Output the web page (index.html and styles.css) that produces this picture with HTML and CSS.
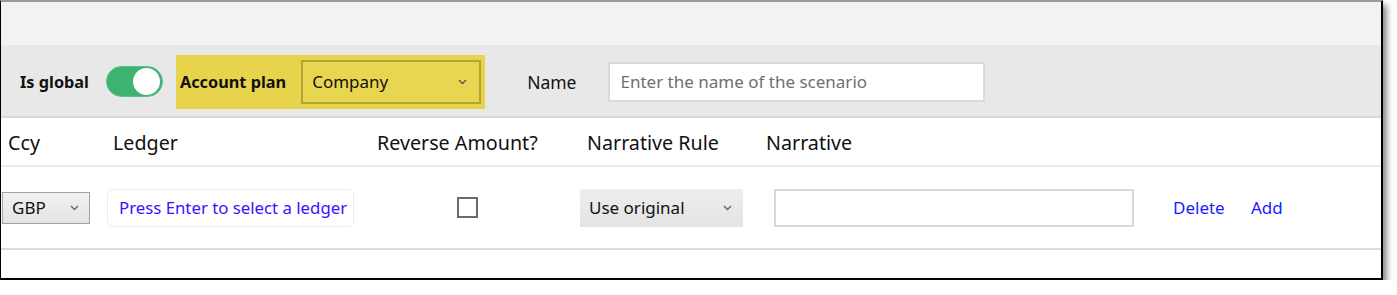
FILE: index.html
```html
<!DOCTYPE html>
<html lang="en">
<head>
    <meta charset="UTF-8">
    <title>Scenario rules</title>
    <link rel="stylesheet" href="styles.css">
</head>
<body>

    <div class="frame">
        <div class="top-strip"></div>

        <div class="toolbar">
            <span class="label bold">Is global</span>
            <span class="toggle on"><span class="knob"></span></span>

            <div class="highlight">
                <span class="label bold">Account plan</span>
                <div class="select plan-select">
                    <span>Company</span>
                    <svg class="chevron" width="9" height="6" viewBox="0 0 9 6"><polyline points="1,1 4.5,4.5 8,1" fill="none" stroke="#555" stroke-width="1.4"/></svg>
                </div>
            </div>

            <span class="label name-label">Name</span>
            <input class="name-input" type="text" placeholder="Enter the name of the scenario">
        </div>

        <div class="grid head-row">
            <div class="cell h-ccy">Ccy</div>
            <div class="cell h-ledger">Ledger</div>
            <div class="cell h-reverse">Reverse Amount?</div>
            <div class="cell h-rule">Narrative Rule</div>
            <div class="cell h-narrative">Narrative</div>
            <div class="cell"></div>
            <div class="cell"></div>
        </div>

        <div class="grid body-row">
            <div class="cell c-ccy">
                <div class="select ccy-select">
                    <span>GBP</span>
                    <svg class="chevron" width="9" height="6" viewBox="0 0 9 6"><polyline points="1,1 4.5,4.5 8,1" fill="none" stroke="#666" stroke-width="1.4"/></svg>
                </div>
            </div>
            <div class="cell c-ledger">
                <button class="ledger-btn">Press Enter to select a ledger</button>
            </div>
            <div class="cell c-reverse">
                <span class="checkbox"></span>
            </div>
            <div class="cell c-rule">
                <div class="select rule-select">
                    <span>Use original</span>
                    <svg class="chevron" width="9" height="6" viewBox="0 0 9 6"><polyline points="1,1 4.5,4.5 8,1" fill="none" stroke="#666" stroke-width="1.4"/></svg>
                </div>
            </div>
            <div class="cell c-narrative">
                <input class="narrative-input" type="text">
            </div>
            <div class="cell c-link"><a class="link" href="#">Delete</a></div>
            <div class="cell c-link"><a class="link" href="#">Add</a></div>
        </div>
    </div>

</body>
</html>
```

FILE: styles.css
```css
/* Scenario editor - screenshot frame with toolbar and one rule row */
:root {
    --strip-bg: #f2f2f2;
    --toolbar-bg: #e8e8e8;
    --highlight: #e8d44c;
    --highlight-dark: #b3a43a;
    --toggle-green: #3cb371;
    --line-light: #ebebeb;
    --line-mid: #dcdcdc;
    --link-blue: #1a1aff;
    --ledger-blue: #3a12ff;
}

html, body {
    margin: 0;
    background: #fff;
}

body {
    font-family: 'Noto Sans', 'Open Sans', sans-serif;
    color: #111;
}

.frame {
    width: 1383px;
    height: 280px;
    box-sizing: border-box;
    border-top: 2px solid #9a9a9a;
    border-left: 1px solid #000;
    border-right: 2px solid #000;
    border-bottom: 2px solid #000;
    box-shadow: 4px 5px 6px rgba(0, 0, 0, 0.45);
    overflow: hidden;
}

.top-strip {
    height: 43px;
    background: var(--strip-bg);
}

/* toolbar */
.toolbar {
    height: 73px;
    box-sizing: border-box;
    background: var(--toolbar-bg);
    border-bottom: 2px solid #d9d9d9;
    display: flex;
    align-items: center;
    padding: 2px 0 0 19px;
}

.label {
    font-size: 17.5px;
}

.bold {
    font-weight: 700;
    font-size: 16.3px;
}

.toggle {
    display: flex;
    justify-content: flex-end;
    align-items: center;
    width: 57px;
    height: 31px;
    box-sizing: border-box;
    margin-left: 17px;
    padding: 2px;
    border-radius: 16px;
    background: var(--toggle-green);
    border: 1px solid #5cc08a;
}

.knob {
    width: 27px;
    height: 27px;
    border-radius: 50%;
    background: #fff;
}

.highlight {
    display: flex;
    align-items: center;
    margin-left: 13px;
    height: 54px;
    padding: 0 4px;
    background: var(--highlight);
}

.select {
    display: flex;
    align-items: center;
    justify-content: space-between;
    box-sizing: border-box;
    font-size: 17px;
}

.plan-select {
    width: 180px;
    height: 44px;
    margin-left: 15px;
    padding: 0 12px 0 9px;
    border: 2px solid var(--highlight-dark);
    background: #e9d650;
}

.name-label {
    margin-left: 42px;
}

.name-input {
    width: 377px;
    height: 40px;
    box-sizing: border-box;
    margin-left: 31px;
    padding: 0 11px;
    border: 2px solid #dadada;
    background: #fff;
    font-family: inherit;
    font-size: 17px;
    outline: none;
}

.name-input::placeholder {
    color: #6f6f6f;
}

/* table */
.grid {
    display: grid;
    grid-template-columns: 106px 264px 209px 186px 400px 78px 1fr;
}

.head-row {
    height: 49px;
    box-sizing: border-box;
    padding-top: 2px;
    border-bottom: 2px solid var(--line-light);
    align-items: center;
    font-size: 19.7px;
}

.h-ccy { padding-left: 7px; }
.h-ledger { padding-left: 6px; }
.h-reverse { padding-left: 6px; }
.h-rule { padding-left: 7px; }

.body-row {
    height: 81px;
    border-bottom: 2px solid var(--line-mid);
    align-items: center;
    font-size: 17px;
}

.c-ccy { padding-left: 1px; }

.ccy-select {
    width: 88px;
    height: 32px;
    padding: 0 10px 0 9px;
    border: 1px solid #a3a3a3;
    background: linear-gradient(#f2f2f2, #e4e4e4);
}

.ledger-btn {
    width: 247px;
    height: 38px;
    padding: 0 0 0 11px;
    text-align: left;
    border: 1px solid #ececec;
    border-radius: 5px;
    background: #fff;
    color: var(--ledger-blue);
    font-family: inherit;
    font-size: 16.8px;
}

.c-reverse {
    padding-left: 86px;
    display: flex;
}

.checkbox {
    width: 21px;
    height: 21px;
    box-sizing: border-box;
    border: 2px solid #6b6b6b;
    background: #fff;
}

.rule-select {
    width: 163px;
    height: 38px;
    padding: 0 11px 0 9px;
    background: linear-gradient(#eeeeee, #e3e3e3);
}

.c-narrative { padding-left: 8px; }

.narrative-input {
    width: 360px;
    height: 38px;
    box-sizing: border-box;
    border: 2px solid #d8d8d8;
    background: #fff;
    outline: none;
}

.c-link { padding-left: 7px; }

.link {
    color: var(--link-blue);
    text-decoration: none;
}
```
